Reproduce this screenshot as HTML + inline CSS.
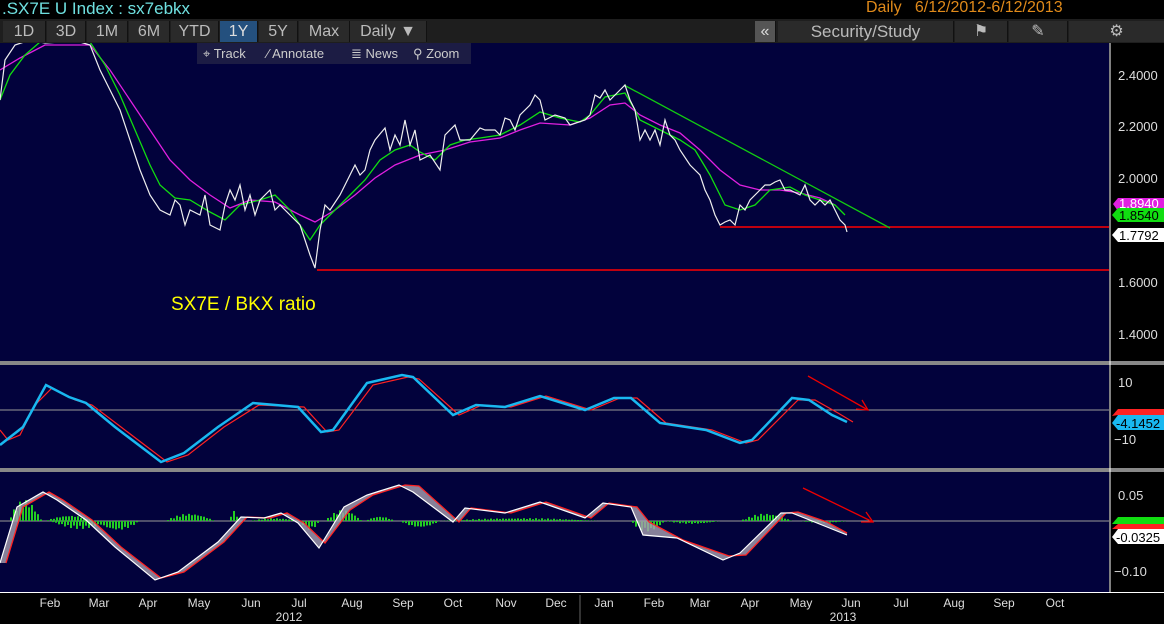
<!DOCTYPE html><html><head><meta charset="utf-8"><style>
*{margin:0;padding:0}body{width:1164px;height:624px;background:#000;overflow:hidden;font-family:"Liberation Sans",sans-serif;position:relative}
.t{position:absolute;white-space:nowrap;z-index:2}
.btn{position:absolute;z-index:2;top:21px;height:21px;background:#2a2a2a;color:#bbb;font-size:16px;line-height:21px;text-align:center;border-right:1px solid #111}
svg{position:absolute;left:0;top:0;z-index:1}
</style></head><body>
<svg width="1164" height="624" viewBox="0 0 1164 624">
<rect x="0" y="43" width="1109" height="549" fill="#02023c"/>
<rect x="0" y="361" width="1164" height="4" fill="#888"/>
<rect x="0" y="468" width="1164" height="4" fill="#888"/>
<line x1="1110" y1="43" x2="1110" y2="592" stroke="#fff"/>
<line x1="0" y1="592.5" x2="1164" y2="592.5" stroke="#fff"/>
<line x1="0" y1="410" x2="1109" y2="410" stroke="#999"/>
<line x1="0" y1="521" x2="1109" y2="521" stroke="#999"/>
<line x1="720" y1="227" x2="1109" y2="227" stroke="#f00" stroke-width="1.5"/>
<line x1="317" y1="270" x2="1109" y2="270" stroke="#f00" stroke-width="1.5"/>
<line x1="624" y1="85" x2="890" y2="228" stroke="#1c1" stroke-width="1.3"/>
<polyline fill="none" stroke="#e020e0" stroke-width="1.3" points="0,70 20,58 45,45 90,45 110,70 130,100 150,130 170,160 190,180 210,195 230,208 250,200 275,202 300,215 315,222 335,210 355,195 375,178 395,165 420,155 445,150 470,142 500,138 520,130 540,123 570,125 590,118 610,105 625,103 640,115 660,125 680,133 700,150 720,170 740,185 760,190 780,190 800,193 820,198 835,205"/>
<polyline fill="none" stroke="#1d1" stroke-width="1.3" points="0,100 10,75 25,55 40,42 90,42 105,65 120,95 135,130 150,165 160,185 175,198 190,200 210,212 225,220 240,205 260,200 275,195 290,210 300,225 310,240 320,225 335,210 350,195 365,180 380,160 395,150 410,145 420,152 435,160 450,145 465,140 480,138 500,135 520,125 540,112 560,118 580,122 590,115 605,97 625,93 635,110 640,120 660,130 680,140 695,150 710,175 725,205 740,210 755,205 770,190 790,187 805,195 820,200 835,205 845,215"/>
<polyline fill="none" stroke="#eee" stroke-width="1.2" points="0,100 5,60 15,45 30,40 45,43 60,42 80,42 90,45 100,70 110,90 120,110 130,140 140,170 150,195 160,210 170,215 175,200 180,205 185,225 190,210 200,215 205,195 210,225 220,230 225,205 230,190 235,200 240,185 245,210 250,195 255,215 260,200 270,190 275,210 280,205 290,215 300,225 305,240 310,255 315,268 320,230 325,205 330,210 340,195 345,185 355,165 360,175 365,170 370,150 375,140 385,128 390,150 395,135 400,145 405,120 410,145 415,130 420,160 430,155 440,170 445,135 455,125 460,140 470,140 480,128 485,130 495,130 500,135 505,118 510,120 515,130 520,115 530,105 535,95 540,100 545,120 555,115 565,118 570,125 585,120 590,115 595,95 600,98 605,90 610,100 615,95 620,90 625,85 630,100 635,110 640,140 645,130 650,140 655,130 660,145 665,120 670,135 675,140 680,150 690,165 700,175 705,190 710,200 715,215 720,225 725,222 730,220 735,225 740,205 745,210 750,200 760,190 765,185 770,185 775,182 780,180 785,190 790,190 800,195 805,185 810,200 815,205 820,200 825,205 830,200 835,210 840,220 845,225 847,232"/>
<g id="hist" stroke="#2c2" stroke-width="2"></g>
<polygon fill="#a8a0b0" opacity=".8" points="0,563 17,507 43,492 57,500 86,520 115,547 155,580 178,572 218,542 241,517 264,518 281,513 298,523 319,548 344,507 367,495 399,485 413,492 453,522 465,508 505,513 540,502 585,518 603,503 631,507 643,535 677,538 723,560 740,553 781,513 792,513 827,527 847,535 847,533 827,522 798,512 786,513 746,555 729,556 683,540 649,522 637,507 609,503 591,518 546,502 511,513 471,508 459,522 419,486 405,485 373,495 350,510 325,543 304,523 287,513 270,518 247,517 224,542 184,572 161,578 121,547 92,520 63,500 49,492 23,507 6,563"/>
<polyline fill="none" stroke="#f22" stroke-width="1.3" points="6,563 23,507 49,492 63,500 92,520 121,547 161,578 184,572 224,542 247,517 270,518 287,513 304,523 325,543 350,510 373,495 405,485 419,486 459,522 471,508 511,513 546,502 591,518 609,503 637,507 649,522 683,540 729,556 746,555 786,513 798,512 827,522 847,533"/>
<polyline fill="none" stroke="#fff" stroke-width="1.2" points="0,563 17,507 43,492 57,500 86,520 115,547 155,580 178,572 218,542 241,517 264,518 281,513 298,523 319,548 344,507 367,495 399,485 413,492 453,522 465,508 505,513 540,502 585,518 603,503 631,507 643,535 677,538 723,560 740,553 781,513 792,513 827,527 847,535"/>
<polyline fill="none" stroke="#f22" stroke-width="1.2" points="0,430 8,440 20,435 35,405 52,388 75,400 92,405 121,427 167,462 188,455 224,427 259,405 304,407 327,432 339,430 373,385 408,377 419,379 459,415 482,405 511,407 546,396 591,410 620,398 637,398 666,423 712,430 746,443 758,440 798,400 815,400 838,413 853,422"/>
<polyline fill="none" stroke="#19b8f0" stroke-width="2.5" points="0,445 23,427 46,385 69,397 86,403 115,427 161,462 184,453 218,427 253,403 298,407 321,432 333,430 367,383 402,375 413,377 453,415 476,405 505,407 540,396 585,410 614,398 631,398 660,423 706,430 740,443 752,440 792,398 809,400 832,415 847,422"/>
<g stroke="#e00" stroke-width="1.3" fill="none"><line x1="808" y1="376" x2="868" y2="410"/><polyline points="856,409 868,410 862,400"/><line x1="803" y1="488" x2="873" y2="522"/><polyline points="861,522 873,522 866,512"/></g>
<g fill="#ddd" font-size="13" font-family="Liberation Sans">
<text x="1118" y="80">2.4000</text><text x="1118" y="131">2.2000</text><text x="1118" y="183">2.0000</text><text x="1118" y="287">1.6000</text><text x="1118" y="339">1.4000</text>
<text x="1118" y="387">10</text><text x="1114" y="444">−10</text><text x="1118" y="500">0.05</text><text x="1114" y="576">−0.10</text>
</g>
<g font-size="13"><path d="M1113,204 l5,-6 h46 v13 h-46z" fill="#e020e0"/><text x="1119" y="208" fill="#fff">1.8940</text>
<path d="M1112,215 l6,-7 h46 v14 h-46z" fill="#1d1"/><text x="1119" y="220" fill="#000">1.8540</text>
<path d="M1112,235 l6,-7 h46 v14 h-46z" fill="#fff"/><text x="1119" y="240" fill="#000">1.7792</text>
<path d="M1112,416 l6,-7 h46 v6 h-46z" fill="#f22"/>
<path d="M1112,423 l6,-8 h46 v15 h-46z" fill="#19b8f0"/><text x="1116" y="428" fill="#000">-4.1452</text>
<path d="M1112,524 l6,-7 h46 v7 h-46z" fill="#1d1"/><path d="M1112,529 l6,-5 h46 v5 h-46z" fill="#f22"/>
<path d="M1112,537 l6,-8 h46 v15 h-46z" fill="#fff"/><text x="1116" y="542" fill="#000">-0.0325</text></g>
<text x="171" y="310" fill="#ff0" font-size="19">SX7E / BKX ratio</text>
<g fill="#ddd" font-size="12" text-anchor="middle">
<text x="50" y="607">Feb</text><text x="99" y="607">Mar</text><text x="148" y="607">Apr</text><text x="199" y="607">May</text><text x="251" y="607">Jun</text><text x="299" y="607">Jul</text><text x="352" y="607">Aug</text><text x="403" y="607">Sep</text><text x="453" y="607">Oct</text><text x="506" y="607">Nov</text><text x="556" y="607">Dec</text><text x="604" y="607">Jan</text><text x="654" y="607">Feb</text><text x="700" y="607">Mar</text><text x="750" y="607">Apr</text><text x="801" y="607">May</text><text x="851" y="607">Jun</text><text x="901" y="607">Jul</text><text x="954" y="607">Aug</text><text x="1004" y="607">Sep</text><text x="1055" y="607">Oct</text>
<text x="289" y="621">2012</text><text x="843" y="621">2013</text></g>
<line x1="580" y1="595" x2="580" y2="624" stroke="#666"/>
</svg>
<div class="t" style="left:2px;top:-1px;color:#6fe0e0;font-size:17px">.SX7E U Index : sx7ebkx</div>
<div class="t" style="left:866px;top:-1px;color:#e08a1a;font-size:16px">Daily&nbsp;&nbsp;&nbsp;6/12/2012-6/12/2013</div>
<div style="position:absolute;z-index:2;left:0;top:19px;width:1164px;height:24px;background:#1e1e1e"></div>
<div class="btn" style="left:3px;width:42px">1D</div>
<div class="btn" style="left:47px;width:38px">3D</div>
<div class="btn" style="left:87px;width:40px">1M</div>
<div class="btn" style="left:129px;width:40px">6M</div>
<div class="btn" style="left:171px;width:47px">YTD</div>
<div class="btn" style="left:220px;width:37px;background:#24507e;color:#ddd">1Y</div>
<div class="btn" style="left:259px;width:38px">5Y</div>
<div class="btn" style="left:299px;width:50px">Max</div>
<div class="btn" style="left:350px;width:76px">Daily ▼</div>
<div class="btn" style="left:755px;width:20px;background:#555;color:#ddd">«</div>
<div class="btn" style="left:778px;width:175px;font-size:17px">Security/Study</div>
<div class="btn" style="left:955px;width:52px">⚑</div>
<div class="btn" style="left:1009px;width:58px">✎</div>
<div class="btn" style="left:1069px;width:95px">⚙</div>
<div style="position:absolute;z-index:2;left:197px;top:43px;width:274px;height:21px;background:#1c1c44;color:#ccc;font-size:13px;line-height:21px">
<span style="position:absolute;left:6px">⌖ Track</span><span style="position:absolute;left:70px">⁄ Annotate</span><span style="position:absolute;left:154px">≣ News</span><span style="position:absolute;left:216px">⚲ Zoom</span></div>
<script>
var g=document.getElementById('hist'),s='';
var segs=[[8,42,-22],[45,95,-6],[50,110,8],[95,140,10],[165,215,-8],[228,240,-10],[250,300,-3],[300,320,9],[325,362,-12],[365,395,-5],[400,440,7],[440,600,-3],[630,665,11],[665,720,3],[740,792,-8],[800,847,2]];
segs.forEach(function(a){for(var x=a[0];x<=a[1];x+=3){var t=(x-a[0])/(a[1]-a[0]);var h=a[2]*Math.sin(Math.PI*t)*(0.8+0.2*Math.sin(x));s+='<line x1="'+x+'" y1="521" x2="'+x+'" y2="'+(521+h)+'"/>';}});
g.innerHTML=s;
</script>
</body></html>
